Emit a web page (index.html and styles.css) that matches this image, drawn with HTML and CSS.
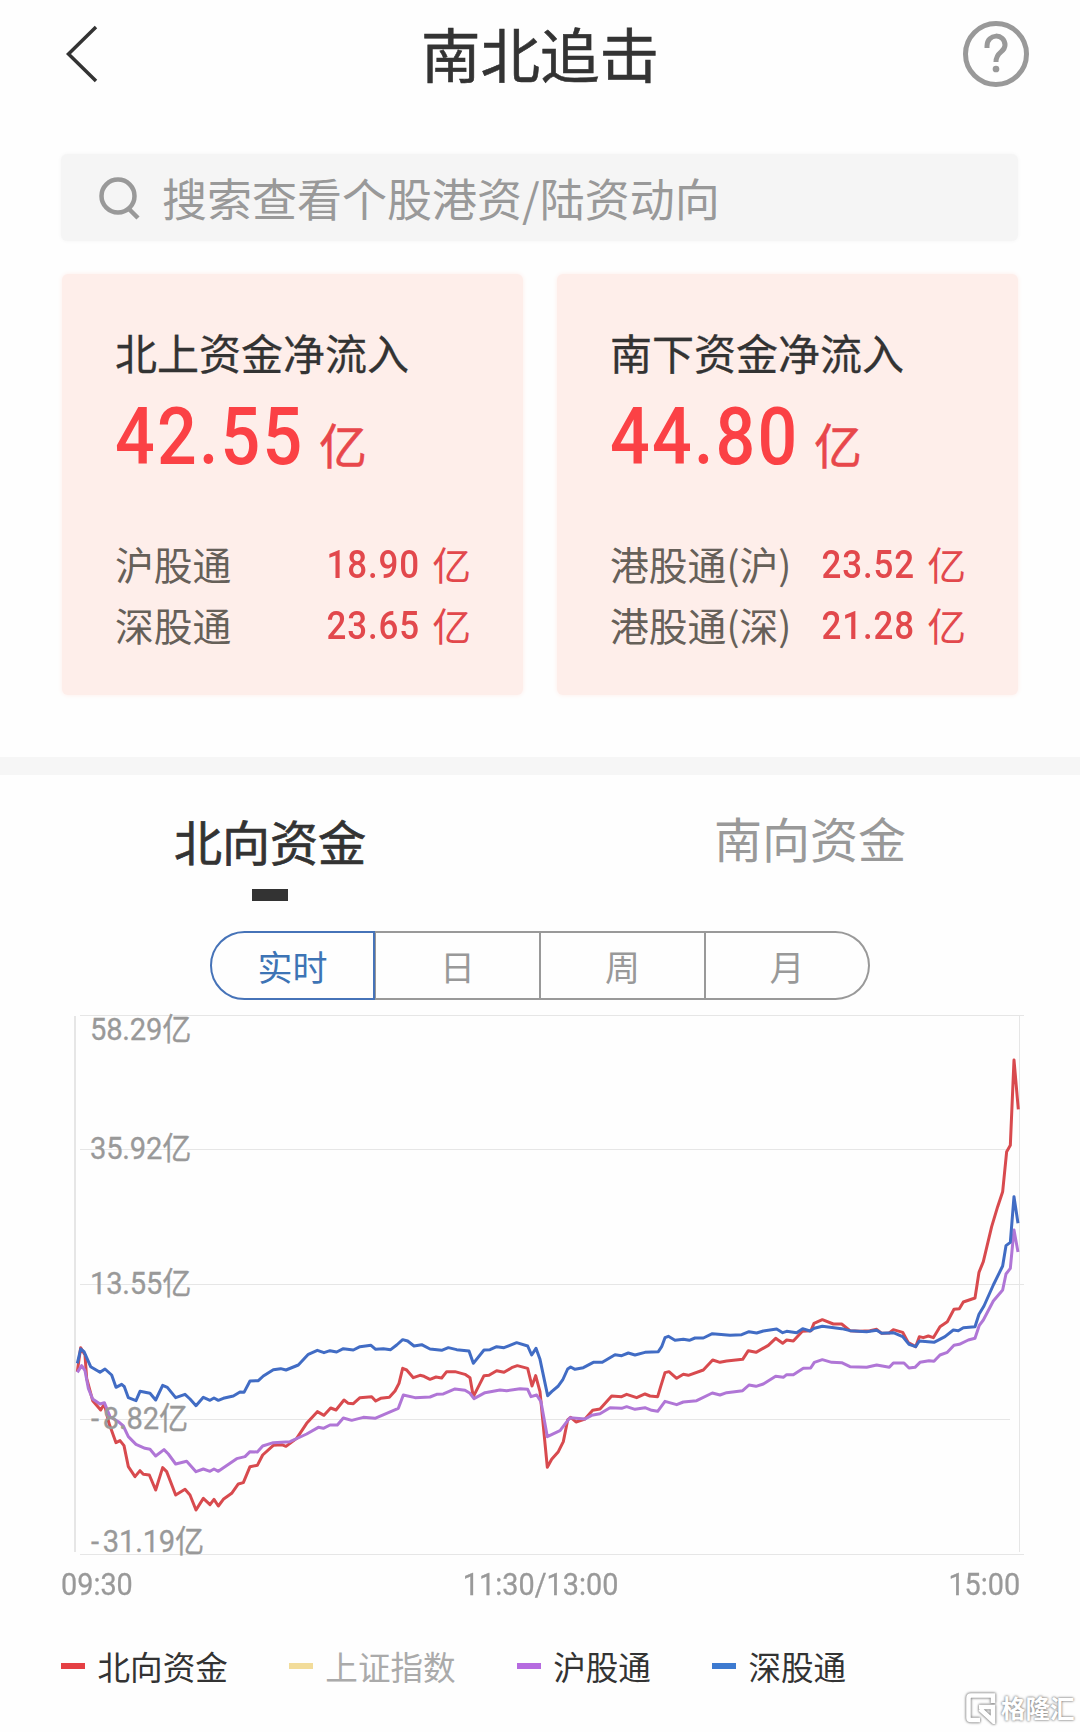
FILE: index.html
```
<!DOCTYPE html>
<html lang="zh-CN">

  <head>

    <meta charset="utf-8">
    <title>南北追击</title>

    <link rel="stylesheet" href="styles.css">

  </head>

  <body>

    <header class="header">
      <svg class="back" viewBox="0 0 36 60">
        <path d="M33 3 L5.500 30 L33 57" />
      </svg>
      <h1>南北追击</h1>
      <svg class="help" viewBox="0 0 66 66">
        <circle cx="33" cy="33" r="30.5" stroke-width="5" />
        <path d="M24 27 V25 C24 12 42 12 42 24 C42 32 33 30 33 41" stroke-width="5" />
        <circle cx="33" cy="48" r="1.6" stroke-width="3.5" />
      </svg>
    </header>

    <div class="search">
      <svg viewBox="0 0 42 44">
        <circle cx="19" cy="19" r="16.5" />
        <path d="M30 32 L39 41" />
      </svg>
      <span>搜索查看个股港资/陆资动向</span>
    </div>

    <div class="cards">

      <div class="card">
        <h2>北上资金净流入</h2>
        <div class="total"><span class="num">42.55</span><span class="unit">亿</span></div>
        <div class="row">
          <span>沪股通</span>
          <span class="value"><span class="num">18.90</span><span>亿</span></span>
        </div>
        <div class="row">
          <span>深股通</span>
          <span class="value"><span class="num">23.65</span><span>亿</span></span>
        </div>
      </div>

      <div class="card">
        <h2>南下资金净流入</h2>
        <div class="total"><span class="num">44.80</span><span class="unit">亿</span></div>
        <div class="row">
          <span>港股通(沪)</span>
          <span class="value"><span class="num">23.52</span><span>亿</span></span>
        </div>
        <div class="row">
          <span>港股通(深)</span>
          <span class="value"><span class="num">21.28</span><span>亿</span></span>
        </div>
      </div>

    </div>

    <div class="divider"></div>

    <div class="tabs">
      <div class="tab active">北向资金</div>
      <div class="tab">南向资金</div>
    </div>

    <div class="periods">
      <div class="period active">实时</div>
      <div class="period">日</div>
      <div class="period">周</div>
      <div class="period">月</div>
    </div>

    <svg class="chart" viewBox="0 0 970 560">
      <g class="grid">
        <path d="M20 15.5 H964" />
        <path d="M20 149.5 H950" />
        <path d="M20 284.5 H964" />
        <path d="M20 419.5 H950" />
        <path d="M20 554.5 H964" />
        <path d="M15 16 V552" stroke-width="2" />
        <path d="M959.5 16 V552" />
      </g>

      <!-- the series use three units per pixel -->
      <g class="series" transform="scale(0.33333)">
        <polyline class="north" points="52,1115 62,1043 75,1065 80,1135 98,1202 122,1230 133,1212 147,1270 168,1328 180,1322 192,1337 205,1400 225,1430 240,1412 250,1423 268,1425 287,1470 308,1403 320,1415 347,1485 375,1468 390,1485 408,1530 430,1495 450,1514 462,1498 475,1518 490,1498 515,1480 535,1452 550,1448 570,1400 592,1396 608,1365 640,1336 665,1334 678,1339 710,1315 740,1270 772,1235 792,1246 812,1224 828,1230 852,1200 865,1210 880,1211 900,1193 935,1190 947,1203 962,1195 988,1192 1005,1173 1017,1150 1028,1105 1040,1110 1060,1133 1080,1126 1092,1129 1110,1138 1128,1131 1145,1134 1160,1115 1185,1115 1215,1123 1230,1133 1240,1190 1272,1127 1287,1126 1310,1112 1332,1117 1355,1103 1372,1097 1403,1105 1416,1158 1427,1127 1440,1175 1462,1402 1475,1378 1495,1355 1510,1325 1523,1260 1532,1252 1548,1266 1575,1257 1598,1231 1620,1227 1655,1188 1685,1190 1700,1183 1730,1193 1755,1182 1770,1188 1793,1190 1802,1160 1815,1118 1827,1115 1850,1135 1870,1123 1885,1126 1930,1110 1958,1080 1980,1087 2000,1083 2048,1078 2065,1052 2088,1057 2125,1036 2147,1015 2168,1030 2180,1020 2200,1023 2227,994 2253,992 2262,970 2287,959 2320,972 2345,972 2370,992 2400,994 2430,992 2450,988 2465,1000 2488,999 2500,989 2528,997 2545,1028 2567,1040 2578,1010 2590,1013 2605,1008 2620,1013 2640,980 2662,965 2682,928 2698,926 2710,906 2745,894 2757,817 2770,785 2795,680 2813,620 2828,575 2840,455 2851,436 2862,180 2875,328" />
        <polyline class="hu" points="52,1117 65,1097 75,1112 85,1165 98,1197 120,1212 133,1208 150,1250 175,1265 190,1278 205,1310 228,1333 255,1345 270,1348 287,1368 312,1349 325,1362 347,1392 380,1384 408,1415 430,1407 450,1414 462,1407 475,1414 530,1376 555,1370 570,1355 592,1356 608,1338 640,1328 690,1325 740,1302 775,1282 790,1285 810,1275 832,1275 850,1254 875,1261 910,1252 945,1255 1015,1225 1030,1185 1065,1193 1110,1191 1130,1183 1150,1182 1185,1167 1215,1171 1230,1180 1242,1196 1275,1178 1320,1170 1340,1172 1380,1166 1403,1168 1413,1190 1430,1185 1443,1205 1462,1310 1500,1292 1530,1253 1575,1257 1595,1246 1620,1241 1650,1223 1685,1225 1700,1220 1725,1228 1755,1223 1775,1231 1793,1234 1815,1204 1850,1214 1870,1206 1910,1202 1957,1179 1980,1185 2000,1178 2048,1172 2067,1155 2088,1159 2110,1152 2147,1129 2170,1132 2180,1124 2200,1124 2230,1105 2252,1104 2263,1087 2287,1079 2315,1087 2345,1088 2370,1100 2420,1102 2450,1095 2488,1102 2500,1089 2532,1089 2547,1104 2565,1102 2580,1087 2607,1082 2622,1084 2640,1065 2662,1057 2682,1036 2698,1033 2725,1020 2745,1015 2758,976 2770,960 2800,903 2828,870 2838,822 2851,805 2862,690 2874,756" />
        <polyline class="shen" points="52,1090 62,1047 72,1055 92,1100 120,1117 135,1107 155,1125 168,1162 185,1153 193,1160 205,1193 228,1202 240,1174 270,1180 287,1200 308,1156 322,1162 347,1193 375,1183 390,1197 408,1217 430,1192 450,1201 462,1194 475,1201 490,1195 520,1188 540,1176 552,1177 570,1143 595,1142 610,1128 640,1109 662,1106 678,1110 715,1095 745,1063 772,1051 792,1058 810,1052 830,1056 850,1046 880,1050 900,1040 933,1036 947,1048 970,1046 992,1049 1010,1035 1028,1019 1043,1023 1062,1038 1085,1034 1110,1047 1145,1051 1165,1043 1190,1049 1227,1053 1240,1090 1272,1050 1290,1049 1310,1040 1332,1043 1370,1028 1403,1038 1415,1065 1428,1045 1440,1078 1463,1187 1475,1175 1495,1158 1508,1140 1523,1107 1532,1101 1545,1108 1570,1103 1600,1087 1627,1087 1665,1064 1685,1067 1705,1059 1725,1065 1755,1057 1795,1055 1805,1040 1815,1013 1825,1009 1845,1021 1870,1018 1888,1021 1905,1014 1930,1014 1957,1001 2010,1006 2045,1004 2067,995 2090,999 2110,993 2150,987 2168,998 2180,994 2210,998 2228,986 2250,993 2263,985 2287,979 2345,986 2370,992 2420,995 2450,991 2465,1000 2500,998 2528,1010 2547,1033 2567,1040 2578,1023 2622,1027 2655,1010 2680,990 2695,992 2710,983 2745,980 2757,943 2772,918 2800,855 2828,798 2838,737 2851,727 2862,590 2874,670" />
      </g>

      <g class="labels">
        <text transform="translate(30 40) scale(0.94 1)">58.29<tspan class="yi">亿</tspan></text>
        <text transform="translate(30 159) scale(0.94 1)">35.92<tspan class="yi">亿</tspan></text>
        <text transform="translate(30 294) scale(0.94 1)">13.55<tspan class="yi">亿</tspan></text>
        <text transform="translate(31 429) scale(0.94 1)"><tspan class="minus">-</tspan>8.82<tspan class="yi">亿</tspan></text>
        <text transform="translate(31 552) scale(0.94 1)"><tspan class="minus">-</tspan>31.19<tspan class="yi">亿</tspan></text>
      </g>
    </svg>

    <div class="times">
      <span>09:30</span>
      <span>11:30/13:00</span>
      <span>15:00</span>
    </div>

    <div class="legend">
      <div class="item"><i class="dash red"></i>北向资金</div>
      <div class="item off"><i class="dash yellow"></i>上证指数</div>
      <div class="item"><i class="dash purple"></i>沪股通</div>
      <div class="item"><i class="dash blue"></i>深股通</div>
    </div>

    <div class="watermark">
      <svg viewBox="0 0 32 32">
        <path d="M28 11 V3.500 H6 Q3.500 3.500 3.500 6 V26 Q3.500 28 6 28 H15 M14 15 H28 V29 L15 17" />
      </svg>
      <span>格隆汇</span>
    </div>

  </body>

</html>
```
FILE: styles.css
```
body {
    position: relative;
    margin: 0;
    width: 1080px;
    height: 1732px;
    overflow: hidden;
    background-color: #fefefe;
    color: #333333;
    font-family: "Noto Sans CJK SC", sans-serif;
}

h1, h2 {
    margin: 0;
    font-weight: 400;
}

.header {
    display: flex;
    align-items: center;
    justify-content: space-between;
    height: 108px;
    padding: 0 51px 0 63px;
}

.header h1 {
    padding: 0 0 4px 18px;
    font-size: 59.5px;
    line-height: 104px;
    -webkit-text-stroke: 0.6px #333333;
}

.back {
    width: 36px;
    height: 60px;
    fill: none;
    stroke: #333333;
    stroke-width: 3.5;
}

.help {
    width: 66px;
    height: 66px;
    fill: none;
    stroke: #999999;
}

.search {
    display: flex;
    align-items: center;
    box-sizing: border-box;
    width: 957px;
    height: 87px;
    margin: 46px 0 0 61px;
    padding-left: 38px;
    border-radius: 6px;
    background-color: #f5f5f5;
    box-shadow: 0 0 4px #f5f5f5;
    color: #999999;
    font-size: 45px;
    line-height: 88px;
}

.search svg {
    width: 42px;
    height: 44px;
    margin: 2px 21px 0 0;
    fill: none;
    stroke: #999999;
    stroke-width: 4.5;
}

.cards {
    display: flex;
    gap: 35px;
    margin: 33px 0 0 62px;
}

.card {
    box-sizing: border-box;
    width: 461px;
    height: 421px;
    padding: 48px 52px 0 53px;
    border-radius: 6px;
    background-color: #feeeea;
    box-shadow: 0 0 5px #feeeea;
}

.card + .card {
    margin-left: -1px;
}

.card h2 {
    font-size: 42px;
    line-height: 60px;
    -webkit-text-stroke: 0.3px #333333;
}

.num {
    font-family: Roboto, sans-serif;
    font-weight: 500;
}

.total {
    display: flex;
    align-items: baseline;
    height: 146px;
    padding-top: 5px;
    color: #fb4145;
    line-height: 100px;
}

.total .num {
    width: 204px;
    font-size: 79px;
    letter-spacing: 2.5px;
    transform: scaleX(0.885);
    transform-origin: left;
}

.total .unit {
    color: #e8474b;
    font-size: 48px;
    -webkit-text-stroke: 0.5px #e8474b;
}

.row {
    display: flex;
    justify-content: space-between;
    height: 61px;
    color: #666059;
    font-size: 38.8px;
    line-height: 61px;
}

.value {
    display: flex;
    gap: 12px;
    color: #e2484c;
}

.value .num {
    padding-top: 1px;
    letter-spacing: 1px;
    transform: scaleX(0.9);
    transform-origin: right;
}

.divider {
    height: 18px;
    margin-top: 62px;
    background-color: #f6f6f6;
}

.tabs {
    display: flex;
    height: 126px;
}

.tab {
    display: flex;
    flex-direction: column;
    align-items: center;
    width: 540px;
    padding-top: 27px;
    color: #999999;
    font-size: 48px;
    line-height: 70px;
}

.tab.active {
    padding-top: 30px;
    color: #333333;
    -webkit-text-stroke: 0.7px #333333;
}

.tab.active::after {
    content: "";
    width: 36px;
    height: 12px;
    margin-top: 14px;
    background-color: #333333;
}

.periods {
    display: flex;
    width: 660px;
    margin: 30px 0 0 210px;
}

.period {
    box-sizing: border-box;
    width: 165px;
    height: 69px;
    border: 2px solid #999999;
    border-left-width: 1px;
    border-right-width: 1px;
    color: #999999;
    font-size: 35px;
    line-height: 66px;
    text-align: center;
}

.period.active {
    border: 2px solid #4673b8;
    border-radius: 35px 0 0 35px;
    color: #3d74b5;
}

.period:last-child {
    border-right-width: 2px;
    border-radius: 0 35px 35px 0;
}

.chart {
    display: block;
    width: 970px;
    height: 560px;
    margin: 0 0 0 60px;
}

.grid path {
    stroke: #e6e6e6;
}

.series polyline {
    fill: none;
    stroke-width: 9;
    stroke-linejoin: round;
}

.north {
    stroke: #d84a4e;
}

.hu {
    stroke: #b076d6;
}

.shen {
    stroke: #416cc4;
}

.labels text {
    fill: #999999;
    stroke: #999999;
    stroke-width: 0.3;
    font-family: Roboto, sans-serif;
    font-size: 31px;
    letter-spacing: -0.2px;
}

.labels .yi {
    font-family: "Noto Sans CJK SC", sans-serif;
    font-size: 31px;
}

.labels .minus {
    letter-spacing: 4px;
}

.times {
    display: flex;
    justify-content: space-between;
    width: 959px;
    height: 50px;
    margin: 0 0 0 61px;
    color: #999999;
    font-family: Roboto, sans-serif;
    font-size: 31px;
    line-height: 50px;
    -webkit-text-stroke: 0.3px #999999;
}

.times span {
    transform: scaleX(0.93);
}

.times span:first-child {
    transform-origin: left;
}

.times span:last-child {
    transform-origin: right;
}

.legend {
    display: flex;
    margin-left: 61px;
    padding-top: 32px;
    font-size: 32.6px;
    line-height: 48px;
}

.item {
    display: flex;
    align-items: center;
    margin-right: 61px;
}

.item.off {
    color: #aaaaaa;
}

.dash {
    width: 24px;
    height: 6px;
    margin-right: 12.5px;
}

.red {
    background-color: #e54044;
}

.yellow {
    background-color: #f2dc9a;
}

.purple {
    background-color: #b66be0;
}

.blue {
    background-color: #3d7ad0;
}

.watermark {
    position: absolute;
    left: 965px;
    top: 1691px;
    display: flex;
    align-items: center;
    gap: 4px;
    height: 34px;
    color: #ffffff;
    font-size: 24.5px;
    font-weight: 700;
    line-height: 30px;
    text-shadow: 0 0 3px #888888, 0 0 2px #888888;
}

.watermark svg {
    width: 32px;
    height: 32px;
    fill: none;
    stroke: #ffffff;
    stroke-width: 4.5;
    filter: drop-shadow(0 0 1px #888888) drop-shadow(0 0 1px #999999);
}
```
